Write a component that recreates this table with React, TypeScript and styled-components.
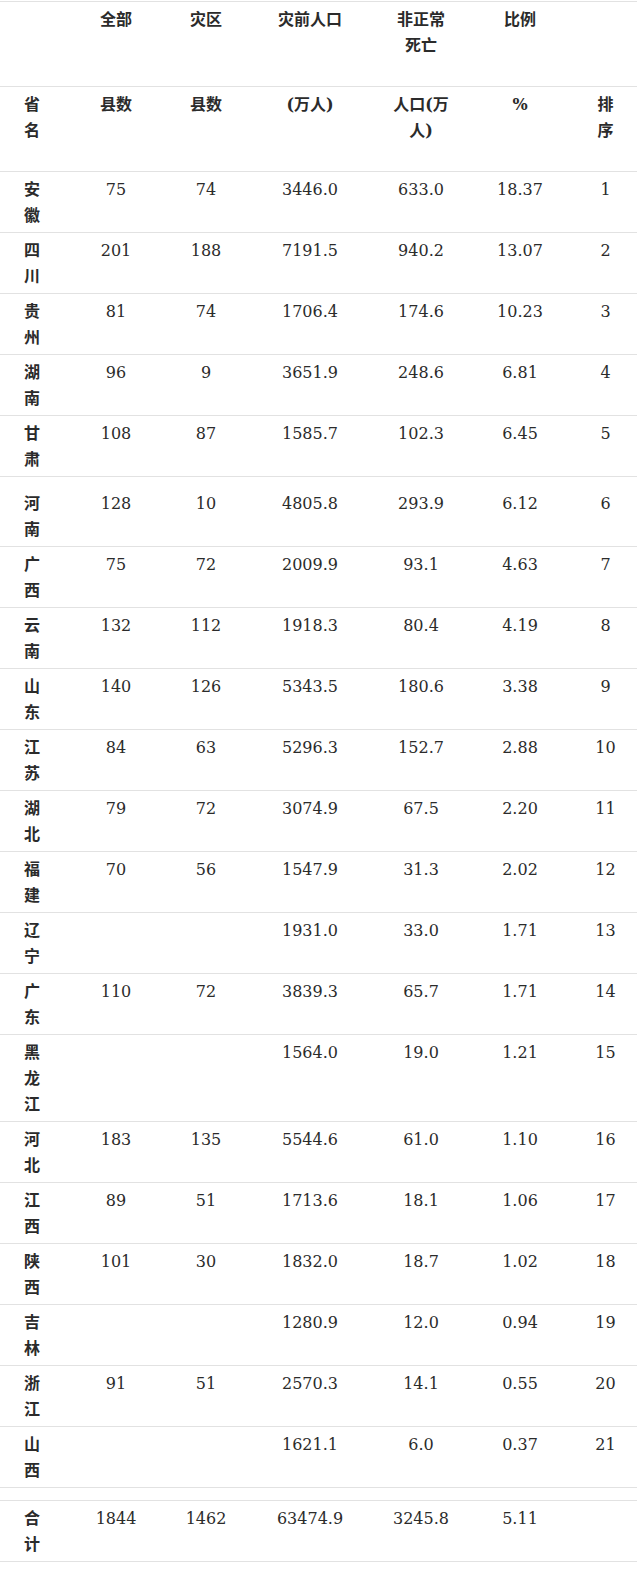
import React from "react";
import styled, { createGlobalStyle } from "styled-components";

const GlobalStyle = createGlobalStyle`
  html, body {
    margin: 0;
    padding: 0;
    background: #ffffff;
  }
`;

type RowData = {
  name: string;
  all: string;
  hit: string;
  pop: string;
  dead: string;
  ratio: string;
  rank: string;
  extraTop?: boolean;
};

const rows: RowData[] = [
  { name: "安徽", all: "75", hit: "74", pop: "3446.0", dead: "633.0", ratio: "18.37", rank: "1" },
  { name: "四川", all: "201", hit: "188", pop: "7191.5", dead: "940.2", ratio: "13.07", rank: "2" },
  { name: "贵州", all: "81", hit: "74", pop: "1706.4", dead: "174.6", ratio: "10.23", rank: "3" },
  { name: "湖南", all: "96", hit: "9", pop: "3651.9", dead: "248.6", ratio: "6.81", rank: "4" },
  { name: "甘肃", all: "108", hit: "87", pop: "1585.7", dead: "102.3", ratio: "6.45", rank: "5" },
  { name: "河南", all: "128", hit: "10", pop: "4805.8", dead: "293.9", ratio: "6.12", rank: "6", extraTop: true },
  { name: "广西", all: "75", hit: "72", pop: "2009.9", dead: "93.1", ratio: "4.63", rank: "7" },
  { name: "云南", all: "132", hit: "112", pop: "1918.3", dead: "80.4", ratio: "4.19", rank: "8" },
  { name: "山东", all: "140", hit: "126", pop: "5343.5", dead: "180.6", ratio: "3.38", rank: "9" },
  { name: "江苏", all: "84", hit: "63", pop: "5296.3", dead: "152.7", ratio: "2.88", rank: "10" },
  { name: "湖北", all: "79", hit: "72", pop: "3074.9", dead: "67.5", ratio: "2.20", rank: "11" },
  { name: "福建", all: "70", hit: "56", pop: "1547.9", dead: "31.3", ratio: "2.02", rank: "12" },
  { name: "辽宁", all: "", hit: "", pop: "1931.0", dead: "33.0", ratio: "1.71", rank: "13" },
  { name: "广东", all: "110", hit: "72", pop: "3839.3", dead: "65.7", ratio: "1.71", rank: "14" },
  { name: "黑龙江", all: "", hit: "", pop: "1564.0", dead: "19.0", ratio: "1.21", rank: "15" },
  { name: "河北", all: "183", hit: "135", pop: "5544.6", dead: "61.0", ratio: "1.10", rank: "16" },
  { name: "江西", all: "89", hit: "51", pop: "1713.6", dead: "18.1", ratio: "1.06", rank: "17" },
  { name: "陕西", all: "101", hit: "30", pop: "1832.0", dead: "18.7", ratio: "1.02", rank: "18" },
  { name: "吉林", all: "", hit: "", pop: "1280.9", dead: "12.0", ratio: "0.94", rank: "19" },
  { name: "浙江", all: "91", hit: "51", pop: "2570.3", dead: "14.1", ratio: "0.55", rank: "20" },
  { name: "山西", all: "", hit: "", pop: "1621.1", dead: "6.0", ratio: "0.37", rank: "21" },
];

const total: RowData = {
  name: "合计",
  all: "1844",
  hit: "1462",
  pop: "63474.9",
  dead: "3245.8",
  ratio: "5.11",
  rank: "",
};

// header cells, "/" marks a line break
const head1 = ["", "全部", "灾区", "灾前人口", "非正常/死亡", "比例", ""];
const head2 = ["省/名", "县数", "县数", "(万人)", "人口(万/人)", "%", "排/序"];

const Page = styled.div`
  padding-top: 1px;
  width: 637px;
  font-family: "DejaVu Serif", "Noto Sans CJK SC", serif;
  font-size: 16px;
  color: #2b2b2b;
`;

const Table = styled.div`
  border-top: 1px solid #e2e2e2;
`;

const Row = styled.div<{ $minHeight?: number; $padTop?: number }>`
  display: grid;
  grid-template-columns: 64px 104px 76px 132px 90px 108px 63px;
  box-sizing: border-box;
  min-height: ${(p) => (p.$minHeight ? `${p.$minHeight}px` : "0")};
  padding-top: ${(p) => p.$padTop ?? 0}px;
  border-bottom: 1px solid #e2e2e2;
`;

const Cell = styled.div<{ $head?: boolean }>`
  padding: 5px 0 3px;
  line-height: 26px;
  text-align: center;
  font-weight: ${(p) => (p.$head ? 600 : 400)};
  white-space: nowrap;
`;

const Line = styled.div``;

const EmptyRow = styled.div`
  height: 13px;
  box-sizing: border-box;
  border-bottom: 1px solid #e2e2e2;
`;

const Lines = ({ parts }: { parts: string[] }) => (
  <>
    {parts.map((t, i) => (
      <Line key={i}>{t}</Line>
    ))}
  </>
);

const HeaderRow = ({ cells }: { cells: string[] }) => (
  <Row $minHeight={85}>
    {cells.map((c, i) => (
      <Cell key={i} $head>
        <Lines parts={c ? c.split("/") : []} />
      </Cell>
    ))}
  </Row>
);

const DataRow = ({ r }: { r: RowData }) => (
  <Row $padTop={r.extraTop ? 9 : 0}>
    <Cell $head>
      <Lines parts={Array.from(r.name)} />
    </Cell>
    <Cell>{r.all}</Cell>
    <Cell>{r.hit}</Cell>
    <Cell>{r.pop}</Cell>
    <Cell>{r.dead}</Cell>
    <Cell>{r.ratio}</Cell>
    <Cell>{r.rank}</Cell>
  </Row>
);

export default function App() {
  return (
    <Page>
      <GlobalStyle />
      <Table>
        <HeaderRow cells={head1} />
        <HeaderRow cells={head2} />
        {rows.map((r) => (
          <DataRow key={r.name} r={r} />
        ))}
        <EmptyRow />
        <DataRow r={total} />
      </Table>
    </Page>
  );
}
